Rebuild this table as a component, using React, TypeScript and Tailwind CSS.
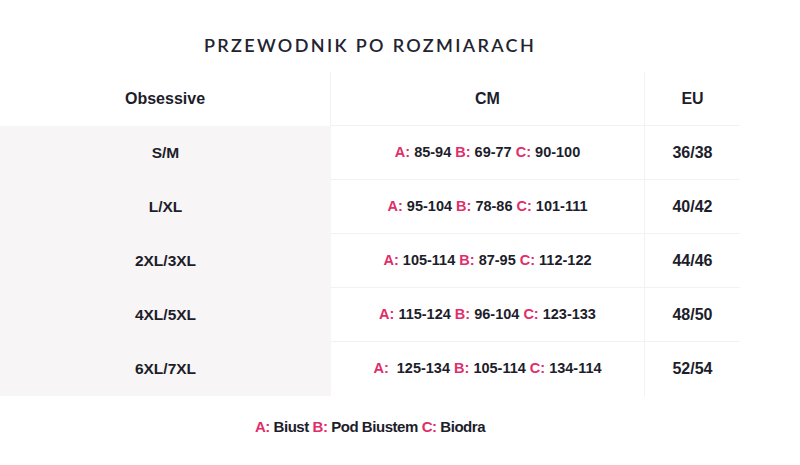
import React from 'react';

type Row = {
  size: string;
  a: string;
  b: string;
  c: string;
  eu: string;
};

const rows: Row[] = [
  { size: 'S/M', a: '85-94', b: '69-77', c: '90-100', eu: '36/38' },
  { size: 'L/XL', a: '95-104', b: '78-86', c: '101-111', eu: '40/42' },
  { size: '2XL/3XL', a: '105-114', b: '87-95', c: '112-122', eu: '44/46' },
  { size: '4XL/5XL', a: '115-124', b: '96-104', c: '123-133', eu: '48/50' },
  { size: '6XL/7XL', a: ' 125-134', b: '105-114', c: '134-114', eu: '52/54' },
];

const Pink: React.FC<{ children: React.ReactNode }> = ({ children }) => (
  <span className="text-[#df2e6a]">{children}</span>
);

const App: React.FC = () => {
  return (
    <div className="w-[800px] h-[465px] bg-white overflow-hidden text-[#1d1d2b]" style={{ fontFamily: 'Arimo, "Liberation Sans", Arial, sans-serif' }}>
      <div className="w-[740px]">
        <h1 className="pt-[32px] h-[72px] text-center text-[18px] font-semibold tracking-[0.13em] text-[#23232f] font-['Lato',sans-serif]">
          PRZEWODNIK PO ROZMIARACH
        </h1>

        <div className="grid grid-cols-[331px_314px_95px]">
          {/* header */}
          <div className="h-[54px] flex items-center justify-center font-bold text-[16px] border-r border-[#f2f2f2]">
            Obsessive
          </div>
          <div className="h-[54px] flex items-center justify-center font-bold text-[16px] border-r border-b border-[#f2f2f2]">
            CM
          </div>
          <div className="h-[54px] flex items-center justify-center font-bold text-[16px] border-b border-[#f2f2f2]">
            EU
          </div>

          {rows.map((r, i) => (
            <React.Fragment key={r.size}>
              <div className="h-[54px] flex items-center justify-center font-bold text-[15.5px] bg-[#f7f5f5]">
                {r.size}
              </div>
              <div
                className={
                  'h-[54px] flex items-center justify-center font-bold text-[14.5px] border-r border-[#f2f2f2] ' +
                  (i < rows.length - 1 ? 'border-b' : '')
                }
              >
                <span className="whitespace-pre">
                  <Pink>A:</Pink> {r.a} <Pink>B:</Pink> {r.b} <Pink>C:</Pink> {r.c}
                </span>
              </div>
              <div
                className={
                  'h-[54px] flex items-center justify-center font-bold text-[16px] border-[#f2f2f2] ' +
                  (i < rows.length - 1 ? 'border-b' : '')
                }
              >
                {r.eu}
              </div>
            </React.Fragment>
          ))}
        </div>

        <p className="mt-[20px] text-center font-bold text-[15px] tracking-[-0.03em]">
          <Pink>A:</Pink> Biust <Pink>B:</Pink> Pod Biustem <Pink>C:</Pink> Biodra
        </p>
      </div>
    </div>
  );
};

export default App;
